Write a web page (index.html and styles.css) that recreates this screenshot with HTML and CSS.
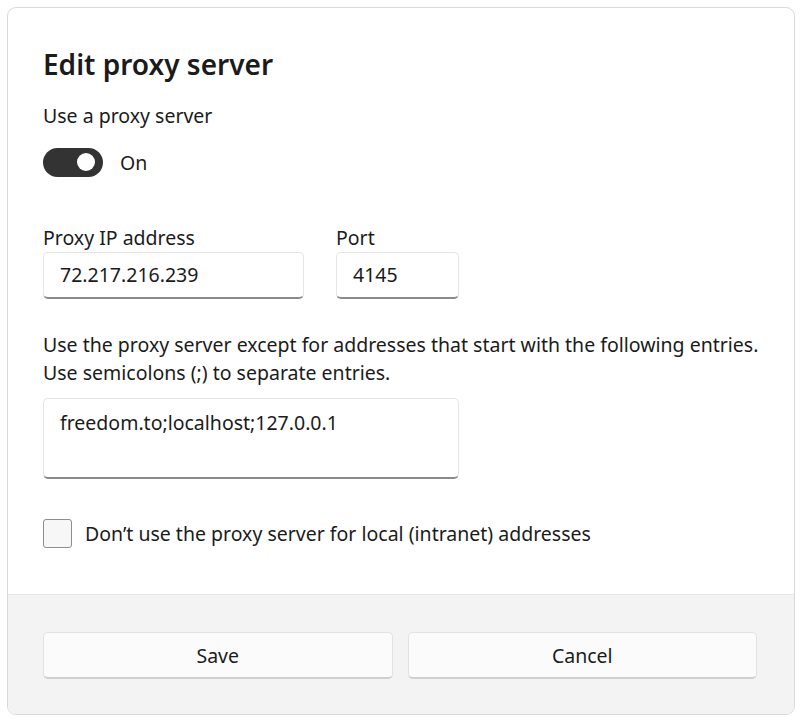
FILE: index.html
```html
<!DOCTYPE html>
<html>
<head>
<meta charset="utf-8">
<link rel="stylesheet" href="styles.css">
</head>
<body>
<div class="dialog">
  <div class="content">
    <h1 class="title">Edit proxy server</h1>
    <div class="label">Use a proxy server</div>
    <div class="toggle-row">
      <span class="toggle"><span class="knob"></span></span>
      <span class="toggle-text">On</span>
    </div>
    <div class="fields">
      <div class="field">
        <div class="label">Proxy IP address</div>
        <div class="input ip">72.217.216.239</div>
      </div>
      <div class="field">
        <div class="label">Port</div>
        <div class="input port">4145</div>
      </div>
    </div>
    <p class="desc">Use the proxy server except for addresses that start with the following entries.<br>Use semicolons (;) to separate entries.</p>
    <div class="input area">freedom.to;localhost;127.0.0.1</div>
    <div class="check-row">
      <span class="checkbox"></span>
      <span class="check-text">Don’t use the proxy server for local (intranet) addresses</span>
    </div>
  </div>
  <div class="footer">
    <button class="btn">Save</button>
    <button class="btn">Cancel</button>
  </div>
</div>
</body>
</html>
```

FILE: styles.css
```css
html, body {
  margin: 0;
  padding: 0;
  background: #ffffff;
}
body {
  font-family: "Noto Sans", "Open Sans", sans-serif;
  color: #1b1b1b;
  padding: 7px 5px 8px 7px;
}
.dialog {
  width: 786px;
  height: 706px;
  border: 1px solid #d9d9d9;
  border-radius: 9px;
  overflow: hidden;
  display: flex;
  flex-direction: column;
  background: #ffffff;
}
.content {
  flex: 1;
  padding: 36px 20px 0 35px;
  display: flex;
  flex-direction: column;
}
.title {
  margin: 0;
  font-size: 28px;
  font-weight: 600;
  line-height: 40px;
}
.label {
  font-size: 19.5px;
  line-height: 28px;
}
.content > .label {
  margin-top: 18px;
}
.toggle-row {
  display: flex;
  align-items: center;
  margin-top: 17px;
  height: 30px;
}
.toggle {
  width: 60px;
  height: 29px;
  border-radius: 15px;
  background: #333333;
  display: flex;
  align-items: center;
  justify-content: flex-end;
  padding-right: 8px;
  box-sizing: border-box;
}
.knob {
  width: 18px;
  height: 18px;
  border-radius: 50%;
  background: #ffffff;
}
.toggle-text {
  font-size: 19.5px;
  margin-left: 17px;
}
.fields {
  display: flex;
  gap: 32px;
  margin-top: 47px;
}
.field {
  display: flex;
  flex-direction: column;
  gap: 0;
}
.input {
  box-sizing: border-box;
  border: 1px solid #e5e5e5;
  border-bottom: 2px solid #8a8a8a;
  border-radius: 5px;
  background: #ffffff;
  font-size: 19.5px;
  line-height: 44px;
  padding: 0 16px;
}
.ip { width: 261px; height: 47px; }
.port { width: 123px; height: 47px; }
.desc {
  margin: 32px 0 0 0;
  font-size: 19.5px;
  line-height: 28px;
  white-space: nowrap;
}
.area {
  margin-top: 11px;
  width: 416px;
  height: 81px;
  line-height: 48px;
}
.check-row {
  display: flex;
  align-items: center;
  margin-top: 40px;
}
.checkbox {
  box-sizing: border-box;
  width: 29px;
  height: 29px;
  border: 1px solid #8d8d8d;
  border-radius: 3px;
  background: #f7f7f7;
}
.check-text {
  font-size: 19.5px;
  margin-left: 13px;
}
.footer {
  height: 120px;
  box-sizing: border-box;
  background: #f3f3f3;
  border-top: 1px solid #e4e4e4;
  padding: 37px 37px 0 35px;
  display: flex;
  gap: 15px;
  align-items: flex-start;
}
.btn {
  flex: 1;
  height: 47px;
  box-sizing: border-box;
  background: #fbfbfb;
  border: 1px solid #e2e2e2;
  border-bottom: 2px solid #cfcfcf;
  border-radius: 5px;
  font-family: "Noto Sans", "Open Sans", sans-serif;
  font-size: 19.5px;
  color: #1b1b1b;
  padding: 0;
}
```
